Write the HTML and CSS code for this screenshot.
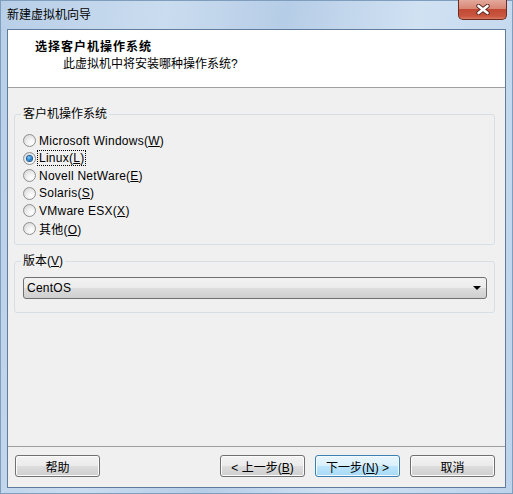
FILE: index.html
```html
<!DOCTYPE html>
<html lang="zh-CN">
<head>
    <meta charset="UTF-8">
    <title>新建虚拟机向导</title>
    <link rel="stylesheet" href="styles.css">
</head>
<body>

    <div class="window">
        <!-- Title bar -->
        <div class="titlebar">
            <span class="title">新建虚拟机向导</span>
            <div class="close">
                <svg width="14" height="11" viewBox="0 0 14 11">
                    <path d="M2.5 2 L11.5 9 M11.5 2 L2.5 9" stroke="#5a2620" stroke-width="4.4" stroke-linecap="round"/>
                    <path d="M2.5 2 L11.5 9 M11.5 2 L2.5 9" stroke="#ffffff" stroke-width="2.6" stroke-linecap="round"/>
                </svg>
            </div>
        </div>

        <div class="client">
            <!-- Wizard header -->
            <div class="header">
                <h1>选择客户机操作系统</h1>
                <p>此虚拟机中将安装哪种操作系统?</p>
            </div>

            <!-- Options -->
            <div class="content">
                <fieldset class="group">
                    <legend>客户机操作系统</legend>
                    <div class="option"><span class="radio"></span><span>Microsoft Windows(<u>W</u>)</span></div>
                    <div class="option"><span class="radio checked"></span><span class="focus">Linux(<u>L</u>)</span></div>
                    <div class="option"><span class="radio"></span><span>Novell NetWare(<u>E</u>)</span></div>
                    <div class="option"><span class="radio"></span><span>Solaris(<u>S</u>)</span></div>
                    <div class="option"><span class="radio"></span><span>VMware ESX(<u>X</u>)</span></div>
                    <div class="option"><span class="radio"></span><span>其他(<u>O</u>)</span></div>
                </fieldset>

                <fieldset class="group version">
                    <legend>版本(<u>V</u>)</legend>
                    <div class="select">
                        <span>CentOS</span>
                        <span class="arrow"></span>
                    </div>
                </fieldset>
            </div>

            <!-- Buttons -->
            <div class="footer">
                <button class="btn">帮助</button>
                <div class="nav">
                    <button class="btn">&lt; 上一步(<u>B</u>)</button>
                    <button class="btn default">下一步(<u>N</u>) &gt;</button>
                    <button class="btn">取消</button>
                </div>
            </div>
        </div>
    </div>

</body>
</html>
```

FILE: styles.css
```css
* {
    box-sizing: border-box;
    margin: 0;
    padding: 0;
}
body {
    font-family: "Liberation Sans", "Noto Sans CJK SC", sans-serif;
    font-size: 12px;
    color: #000;
    background-color: #c4d8ee;
}
.window {
    width: 513px;
    height: 494px;
    display: flex;
    flex-direction: column;
    background: linear-gradient(100deg, #b8cfe8 0%, #cadcef 28%, #b6cde7 48%, #d0e1f2 70%, #bdd3eb 100%);
    box-shadow: inset 0 0 0 1px #7f9dbd;
}

/* Title bar */
.titlebar {
    height: 29px;
    display: flex;
    justify-content: space-between;
    align-items: center;
    padding-left: 7px;
}
.title {
    line-height: 16px;
}
.close {
    align-self: flex-start;
    width: 49px;
    height: 20px;
    margin-right: 6px;
    display: flex;
    align-items: center;
    justify-content: center;
    border: 1px solid #6e2b22;
    border-top: none;
    border-radius: 0 0 5px 5px;
    background: linear-gradient(to bottom, #e3a99c 0%, #d88775 45%, #c24a34 50%, #c9553e 85%, #d97a62 100%);
}

/* Client area */
.client {
    flex: 1;
    margin: 0 7px 6px 7px;
    border: 1px solid #5f7c9c;
    background-color: #f0f0f0;
    display: flex;
    flex-direction: column;
}
.header {
    height: 58px;
    background-color: #fff;
    border-bottom: 1px solid #a0a0a0;
    padding: 9px 0 0 27px;
}
.header h1 {
    font-size: 12px;
    font-weight: bold;
    line-height: 16px;
    letter-spacing: 1px;
}
.header p {
    line-height: 16px;
    margin-top: 1px;
    padding-left: 28px;
}

.content {
    flex: 1;
}
.group {
    margin: 18px 10px 0 6px;
    padding: 10px 7px 7px 8px;
    border: 1px solid #d5dfe5;
    border-radius: 3px;
}
.group legend {
    line-height: 16px;
    padding: 0 2px;
    margin-left: -2px;
}
.option {
    height: 17.5px;
    display: flex;
    align-items: center;
    gap: 3px;
    letter-spacing: 0.25px;
}
.option .focus {
    outline: 1px dotted #000;
    padding: 0 1px;
    margin-left: -1px;
    line-height: 14px;
}
.radio {
    width: 13px;
    height: 13px;
    border-radius: 50%;
    border: 1px solid #8e8f8f;
    background: radial-gradient(circle at 65% 70%, #ffffff 0%, #f2f2f2 35%, #cfcfcf 100%);
    display: flex;
    align-items: center;
    justify-content: center;
}
.radio.checked::after {
    content: "";
    width: 5px;
    height: 5px;
    border-radius: 50%;
    background: radial-gradient(circle at 40% 35%, #8fd3ff 0%, #2b8ad6 45%, #0e4a86 100%);
    box-shadow: 0 0 0 1px #1a5a95;
}

.version {
    margin-top: 8px;
    padding: 8px 7px 13px 8px;
}
.select {
    height: 22px;
    border: 1px solid #707070;
    border-radius: 3px;
    background: linear-gradient(to bottom, #f2f2f2 0%, #ebebeb 50%, #dddddd 50%, #cfcfcf 100%);
    display: flex;
    justify-content: space-between;
    align-items: center;
    padding: 0 5px 0 3px;
    letter-spacing: 0.25px;
}
.arrow {
    width: 0;
    height: 0;
    border-top: 4px solid #000;
    border-left: 4px solid transparent;
    border-right: 4px solid transparent;
}

/* Footer buttons */
.footer {
    border-top: 1px solid #a0a0a0;
    padding: 8px 10px 10px 7px;
    display: flex;
    justify-content: space-between;
}
.nav {
    display: flex;
    gap: 10px;
}
.btn {
    width: 85px;
    height: 22px;
    font-family: inherit;
    font-size: 12px;
    color: #000;
    border: 1px solid #707070;
    border-radius: 3px;
    background: linear-gradient(to bottom, #f2f2f2 0%, #ebebeb 50%, #dddddd 50%, #cfcfcf 100%);
    box-shadow: inset 0 0 0 1px #fcfcfc;
}
.btn.default {
    border-color: #3c7fb1;
    background: linear-gradient(to bottom, #eaf6fd 0%, #d9f0fc 50%, #bee6fd 50%, #a7d9f5 100%);
    box-shadow: inset 0 0 0 1px #f4fbff;
}
```
